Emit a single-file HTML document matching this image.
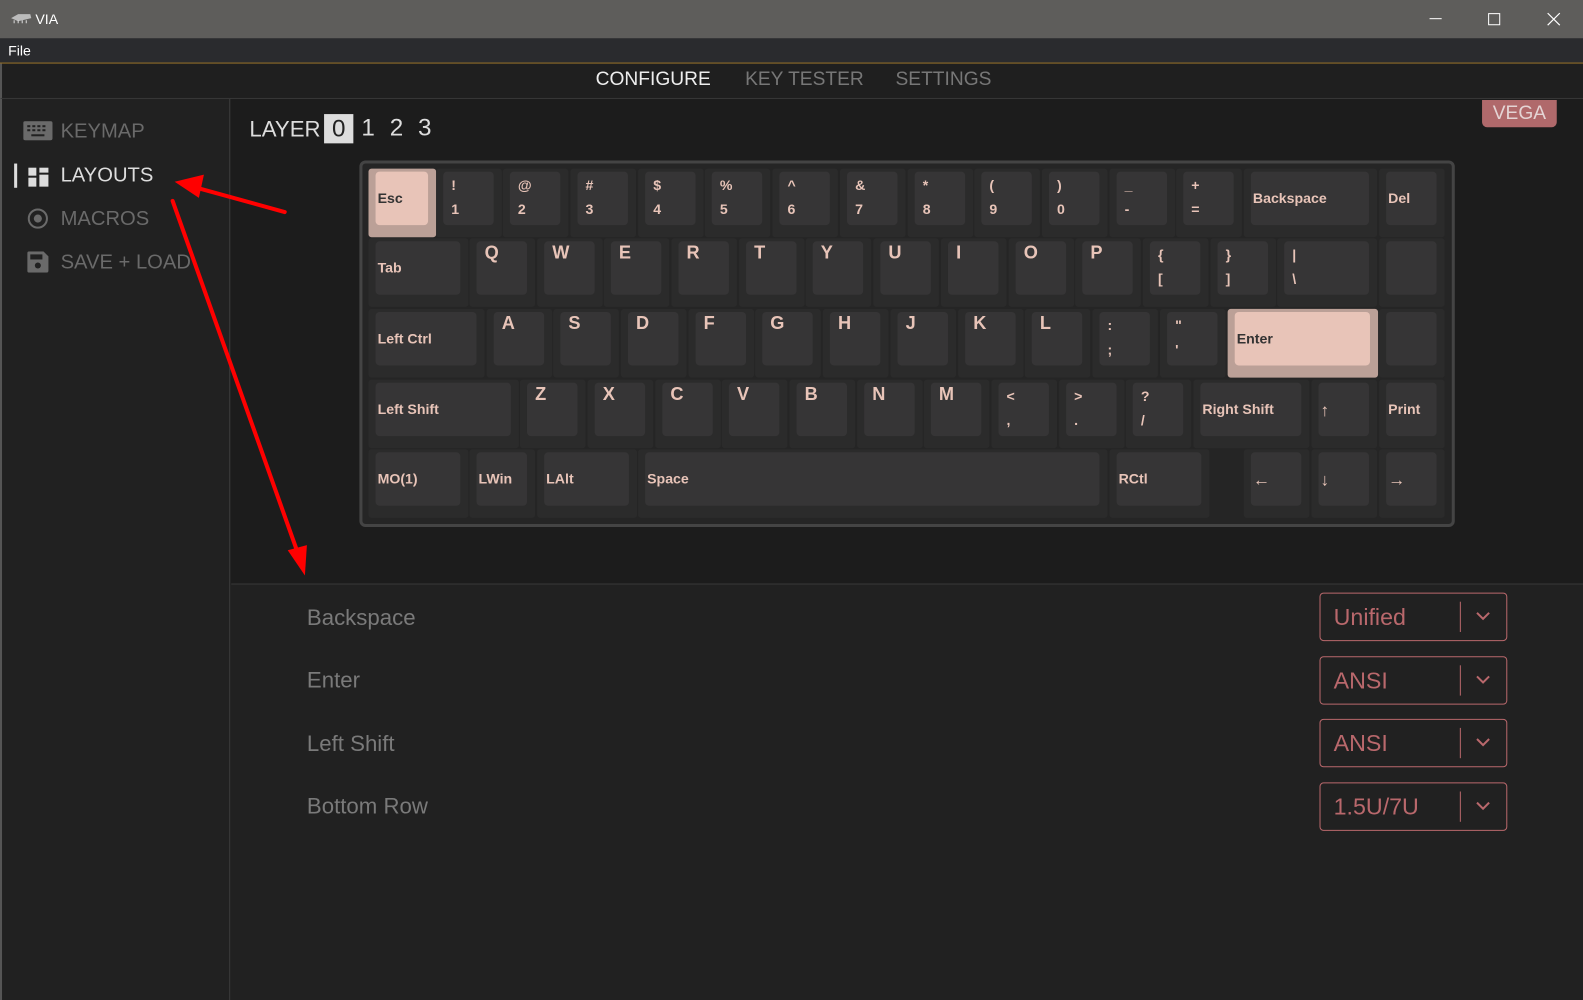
<!DOCTYPE html>
<html><head><meta charset="utf-8">
<style>
*{margin:0;padding:0;box-sizing:border-box}
body{width:1583px;height:991px;background:#212121;font-family:"Liberation Sans",sans-serif;position:relative;overflow:hidden}
#w{position:absolute;left:0;top:0;width:1568px;height:982px;transform:scale(1.00957);transform-origin:0 0}
.a{position:absolute}
#title{left:0;top:0;width:1583px;height:38px;background:#5e5d5b;color:#fff;font-size:14px}
#menu{left:0;top:38px;width:1583px;height:25px;background:#2a2b2e;color:#fff;font-size:14px;border-bottom:1px solid #a47a2a}
#nav{left:0;top:63px;width:1583px;height:35px;background:#1f1f1f;border-bottom:1px solid #3a3a3a;border-left:2px solid #555}
.nv{top:68px;font-size:19px;color:#777}
#side{left:0;top:98px;width:228px;height:893px;background:#212121;border-right:1px solid #3a3a3a;border-left:2px solid #555}
.si{font-size:20px;color:#6a6a6a;left:60px}
#main{left:229px;top:98px;width:1354px;height:481px;background:#1c1c1c}
#kb{left:356px;top:159px;width:1085px;height:363px;background:#252525;border:3px solid #444;border-radius:6px}
.k{position:absolute;height:68px;background:#2b2b2b;border-radius:3px}
.c{position:absolute;left:7px;top:3px;right:8px;bottom:12px;background:#363536;border-radius:4px;color:#e8c4b8;font-weight:bold;font-size:14px}
.c .m{position:absolute;left:2px;top:18px}
.c .l{position:absolute;left:8px;top:1px;font-size:18px}
.c .t{position:absolute;left:8px;top:5px}
.c .b{position:absolute;left:8px;top:29px}
.h{background:#bba097}.h .c{background:#e8c4b8;color:#333}
.lab{left:304px;font-size:22px;color:#7a7a7a}
.dd{left:1307px;width:186px;height:48px;border:1px solid #b9686c;border-radius:4px;color:#b9686c;font-size:23px}
.dd span{position:absolute;left:13px;top:10px}
.dd i{position:absolute;left:138px;top:8px;width:1px;height:30px;background:#b9686c}
.dd svg{position:absolute;left:153px;top:17px}
</style></head><body><div id="w">
<div id="title" class="a"><svg class="a" style="left:10px;top:12px" width="22" height="12"><path d="M1 6 L8 2 L20 2 L21 6 L8 9Z" fill="#bbb"/><path d="M4 8v3M8 8v3M12 8v3M16 8v3" stroke="#ddd"/></svg><span class="a" style="left:35px;top:11px">VIA</span>
<div class="a" style="left:1416px;top:18px;width:12px;height:1px;background:#fff"></div>
<div class="a" style="left:1474px;top:13px;width:12px;height:12px;border:1px solid #fff"></div>
<svg class="a" style="left:1532px;top:12px" width="14" height="14"><path d="M1 1L13 13M13 1L1 13" stroke="#fff" stroke-width="1.2"/></svg></div>
<div id="menu" class="a"><span class="a" style="left:8px;top:4px">File</span></div>
<div id="nav" class="a"></div>
<div class="a nv" style="left:590px;color:#eee">CONFIGURE</div>
<div class="a nv" style="left:738px">KEY TESTER</div>
<div class="a nv" style="left:887px">SETTINGS</div>
<div id="side" class="a"></div>
<svg class="a" style="left:23px;top:120px" width="29" height="19"><rect width="29" height="19" rx="2" fill="#6a6a6a"/><g fill="#212121"><rect x="4" y="4" width="3" height="2"/><rect x="9" y="4" width="3" height="2"/><rect x="14" y="4" width="3" height="2"/><rect x="19" y="4" width="3" height="2"/><rect x="4" y="8" width="3" height="2"/><rect x="9" y="8" width="3" height="2"/><rect x="14" y="8" width="3" height="2"/><rect x="19" y="8" width="3" height="2"/><rect x="8" y="13" width="13" height="2"/></g></svg>
<div class="a si" style="top:119px">KEYMAP</div>
<div class="a" style="left:14px;top:162px;width:3px;height:24px;background:#ddd"></div>
<svg class="a" style="left:28px;top:166px" width="20" height="19"><g fill="#ddd"><rect width="8" height="8"/><rect x="11" width="9" height="5"/><rect x="11" y="7" width="9" height="12"/><rect y="10" width="8" height="9"/></g></svg>
<div class="a si" style="top:163px;color:#ddd">LAYOUTS</div>
<svg class="a" style="left:27px;top:206px" width="21" height="21"><circle cx="10.5" cy="10.5" r="9" fill="none" stroke="#6a6a6a" stroke-width="2"/><circle cx="10.5" cy="10.5" r="4" fill="#6a6a6a"/></svg>
<div class="a si" style="top:206px">MACROS</div>
<svg class="a" style="left:27px;top:249px" width="21" height="21"><path d="M0 2Q0 0 2 0H16L21 5V19Q21 21 19 21H2Q0 21 0 19Z" fill="#6a6a6a"/><rect x="3" y="3" width="12" height="5" fill="#212121"/><circle cx="10.5" cy="14" r="3" fill="#212121"/></svg>
<div class="a si" style="top:249px">SAVE + LOAD</div>
<div id="main" class="a"></div>
<div class="a" style="left:229px;top:578px;width:1354px;height:1px;background:#3a3a3a"></div>
<div class="a" style="left:247px;top:115px;font-size:22px;color:#ddd">LAYER</div>
<div class="a" style="left:321px;top:113px;width:29px;height:29px;background:#ddd;color:#222;font-size:24px;text-align:center;line-height:29px">0</div>
<div class="a" style="left:358px;top:113px;font-size:24px;color:#ddd;word-spacing:8px">1 2 3</div>
<div class="a" style="left:1468px;top:99px;width:74px;height:27px;background:#b0696b;border-radius:0 0 5px 5px;color:#e4d4d4;font-size:19px;text-align:center;line-height:27px">VEGA</div>
<div id="kb" class="a"></div>

<div class="k h" style="left:365px;top:167px;width:67px"><div class="c"><span class="m">Esc</span></div></div>
<div class="k" style="left:432px;top:167px;width:65px"><div class="c"><span class="t">!</span><span class="b">1</span></div></div>
<div class="k" style="left:498px;top:167px;width:65px"><div class="c"><span class="t">@</span><span class="b">2</span></div></div>
<div class="k" style="left:565px;top:167px;width:65px"><div class="c"><span class="t">#</span><span class="b">3</span></div></div>
<div class="k" style="left:632px;top:167px;width:65px"><div class="c"><span class="t">$</span><span class="b">4</span></div></div>
<div class="k" style="left:698px;top:167px;width:65px"><div class="c"><span class="t">%</span><span class="b">5</span></div></div>
<div class="k" style="left:765px;top:167px;width:65px"><div class="c"><span class="t">^</span><span class="b">6</span></div></div>
<div class="k" style="left:832px;top:167px;width:65px"><div class="c"><span class="t">&amp;</span><span class="b">7</span></div></div>
<div class="k" style="left:899px;top:167px;width:65px"><div class="c"><span class="t">*</span><span class="b">8</span></div></div>
<div class="k" style="left:965px;top:167px;width:65px"><div class="c"><span class="t">(</span><span class="b">9</span></div></div>
<div class="k" style="left:1032px;top:167px;width:65px"><div class="c"><span class="t">)</span><span class="b">0</span></div></div>
<div class="k" style="left:1099px;top:167px;width:65px"><div class="c"><span class="t">_</span><span class="b">-</span></div></div>
<div class="k" style="left:1165px;top:167px;width:65px"><div class="c"><span class="t">+</span><span class="b">=</span></div></div>
<div class="k" style="left:1232px;top:167px;width:132px"><div class="c"><span class="m">Backspace</span></div></div>
<div class="k" style="left:1366px;top:167px;width:65px"><div class="c"><span class="m">Del</span></div></div>

<div class="k" style="left:365px;top:236px;width:99px"><div class="c"><span class="m">Tab</span></div></div>
<div class="k" style="left:465px;top:236px;width:65px"><div class="c"><span class="l">Q</span></div></div>
<div class="k" style="left:532px;top:236px;width:65px"><div class="c"><span class="l">W</span></div></div>
<div class="k" style="left:598px;top:236px;width:65px"><div class="c"><span class="l">E</span></div></div>
<div class="k" style="left:665px;top:236px;width:65px"><div class="c"><span class="l">R</span></div></div>
<div class="k" style="left:732px;top:236px;width:65px"><div class="c"><span class="l">T</span></div></div>
<div class="k" style="left:798px;top:236px;width:65px"><div class="c"><span class="l">Y</span></div></div>
<div class="k" style="left:865px;top:236px;width:65px"><div class="c"><span class="l">U</span></div></div>
<div class="k" style="left:932px;top:236px;width:65px"><div class="c"><span class="l">I</span></div></div>
<div class="k" style="left:999px;top:236px;width:65px"><div class="c"><span class="l">O</span></div></div>
<div class="k" style="left:1065px;top:236px;width:65px"><div class="c"><span class="l">P</span></div></div>
<div class="k" style="left:1132px;top:236px;width:65px"><div class="c"><span class="t">{</span><span class="b">[</span></div></div>
<div class="k" style="left:1199px;top:236px;width:65px"><div class="c"><span class="t">}</span><span class="b">]</span></div></div>
<div class="k" style="left:1265px;top:236px;width:99px"><div class="c"><span class="t">|</span><span class="b">\</span></div></div>
<div class="k" style="left:1366px;top:236px;width:65px"><div class="c"></div></div>

<div class="k" style="left:365px;top:306px;width:115px"><div class="c"><span class="m">Left Ctrl</span></div></div>
<div class="k" style="left:482px;top:306px;width:65px"><div class="c"><span class="l">A</span></div></div>
<div class="k" style="left:548px;top:306px;width:65px"><div class="c"><span class="l">S</span></div></div>
<div class="k" style="left:615px;top:306px;width:65px"><div class="c"><span class="l">D</span></div></div>
<div class="k" style="left:682px;top:306px;width:65px"><div class="c"><span class="l">F</span></div></div>
<div class="k" style="left:748px;top:306px;width:65px"><div class="c"><span class="l">G</span></div></div>
<div class="k" style="left:815px;top:306px;width:65px"><div class="c"><span class="l">H</span></div></div>
<div class="k" style="left:882px;top:306px;width:65px"><div class="c"><span class="l">J</span></div></div>
<div class="k" style="left:949px;top:306px;width:65px"><div class="c"><span class="l">K</span></div></div>
<div class="k" style="left:1015px;top:306px;width:65px"><div class="c"><span class="l">L</span></div></div>
<div class="k" style="left:1082px;top:306px;width:65px"><div class="c"><span class="t">:</span><span class="b">;</span></div></div>
<div class="k" style="left:1149px;top:306px;width:65px"><div class="c"><span class="t">"</span><span class="b">'</span></div></div>
<div class="k h" style="left:1216px;top:306px;width:149px"><div class="c"><span class="m">Enter</span></div></div>
<div class="k" style="left:1366px;top:306px;width:65px"><div class="c"></div></div>

<div class="k" style="left:365px;top:376px;width:149px"><div class="c"><span class="m">Left Shift</span></div></div>
<div class="k" style="left:515px;top:376px;width:65px"><div class="c"><span class="l">Z</span></div></div>
<div class="k" style="left:582px;top:376px;width:65px"><div class="c"><span class="l">X</span></div></div>
<div class="k" style="left:649px;top:376px;width:65px"><div class="c"><span class="l">C</span></div></div>
<div class="k" style="left:715px;top:376px;width:65px"><div class="c"><span class="l">V</span></div></div>
<div class="k" style="left:782px;top:376px;width:65px"><div class="c"><span class="l">B</span></div></div>
<div class="k" style="left:849px;top:376px;width:65px"><div class="c"><span class="l">N</span></div></div>
<div class="k" style="left:915px;top:376px;width:65px"><div class="c"><span class="l">M</span></div></div>
<div class="k" style="left:982px;top:376px;width:65px"><div class="c"><span class="t">&lt;</span><span class="b">,</span></div></div>
<div class="k" style="left:1049px;top:376px;width:65px"><div class="c"><span class="t">&gt;</span><span class="b">.</span></div></div>
<div class="k" style="left:1115px;top:376px;width:65px"><div class="c"><span class="t">?</span><span class="b">/</span></div></div>
<div class="k" style="left:1182px;top:376px;width:115px"><div class="c"><span class="m">Right Shift</span></div></div>
<div class="k" style="left:1299px;top:376px;width:65px"><div class="c"><span class="m" style="font-weight:normal;font-size:17px">↑</span></div></div>
<div class="k" style="left:1366px;top:376px;width:65px"><div class="c"><span class="m">Print</span></div></div>

<div class="k" style="left:365px;top:445px;width:99px"><div class="c"><span class="m">MO(1)</span></div></div>
<div class="k" style="left:465px;top:445px;width:65px"><div class="c"><span class="m">LWin</span></div></div>
<div class="k" style="left:532px;top:445px;width:99px"><div class="c"><span class="m">LAlt</span></div></div>
<div class="k" style="left:632px;top:445px;width:465px"><div class="c"><span class="m">Space</span></div></div>
<div class="k" style="left:1099px;top:445px;width:99px"><div class="c"><span class="m">RCtl</span></div></div>
<div class="k" style="left:1232px;top:445px;width:65px"><div class="c"><span class="m" style="font-weight:normal;font-size:17px">←</span></div></div>
<div class="k" style="left:1299px;top:445px;width:65px"><div class="c"><span class="m" style="font-weight:normal;font-size:17px">↓</span></div></div>
<div class="k" style="left:1366px;top:445px;width:65px"><div class="c"><span class="m" style="font-weight:normal;font-size:17px">→</span></div></div>

<div class="a lab" style="top:599px">Backspace</div>
<div class="a lab" style="top:661px">Enter</div>
<div class="a lab" style="top:724px">Left Shift</div>
<div class="a lab" style="top:786px">Bottom Row</div>
<div class="a dd" style="top:587px"><span>Unified</span><i></i><svg width="16" height="10"><path d="M2 2L8 8L14 2" fill="none" stroke="#b9686c" stroke-width="2"/></svg></div>
<div class="a dd" style="top:650px"><span>ANSI</span><i></i><svg width="16" height="10"><path d="M2 2L8 8L14 2" fill="none" stroke="#b9686c" stroke-width="2"/></svg></div>
<div class="a dd" style="top:712px"><span>ANSI</span><i></i><svg width="16" height="10"><path d="M2 2L8 8L14 2" fill="none" stroke="#b9686c" stroke-width="2"/></svg></div>
<div class="a dd" style="top:775px"><span>1.5U/7U</span><i></i><svg width="16" height="10"><path d="M2 2L8 8L14 2" fill="none" stroke="#b9686c" stroke-width="2"/></svg></div>

<svg class="a" style="left:0;top:0" width="1583" height="991">
<path d="M282 210L195 186" stroke="#f00" stroke-width="4" stroke-linecap="round"/>
<path d="M173 180L202 173L197 196Z" fill="#f00"/>
<path d="M171 199L294 545" stroke="#f00" stroke-width="4" stroke-linecap="round"/>
<path d="M302 570L285 545L304 540Z" fill="#f00"/>
</svg>
</div></body></html>
